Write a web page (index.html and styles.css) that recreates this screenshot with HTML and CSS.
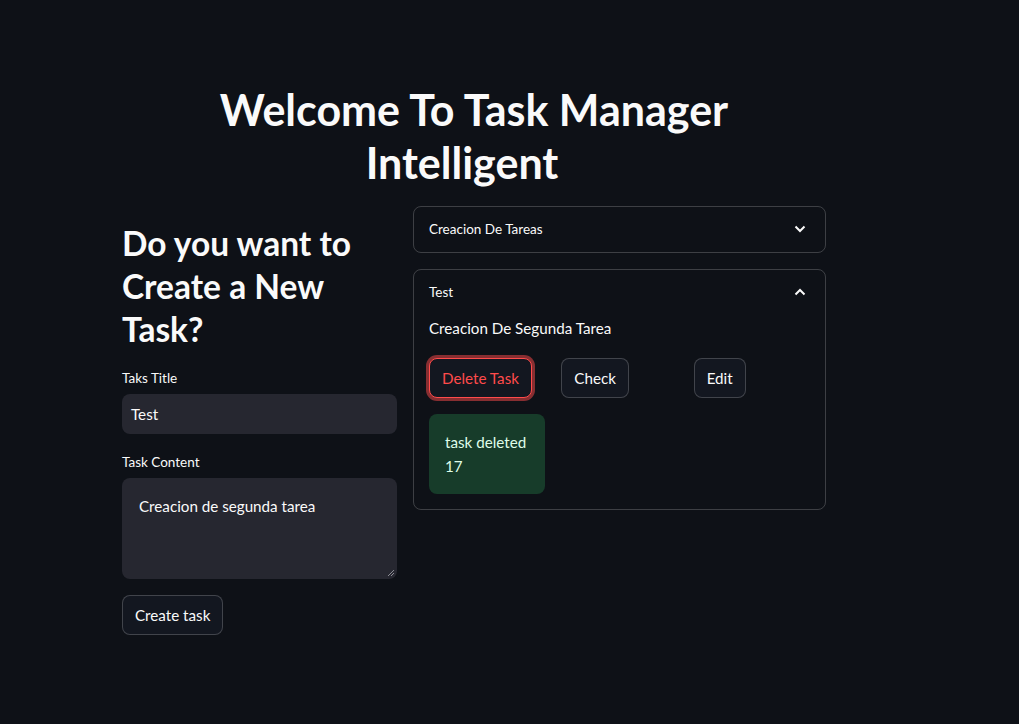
FILE: index.html
```html
<!DOCTYPE html>
<html lang="en">
<head>
<meta charset="utf-8">
<title>Task Manager</title>
<link rel="stylesheet" href="styles.css">
</head>
<body>
<main class="app">
  <div class="block">
    <h1 class="title">Welcome To Task Manager Intelligent<span class="anchor"></span></h1>
    <div class="columns">
      <section class="col col-left">
        <h2 class="subtitle">Do you want to Create a New Task?</h2>
        <div class="field">
          <label class="label">Taks Title</label>
          <div class="input">Test</div>
        </div>
        <div class="field">
          <label class="label">Task Content</label>
          <div class="textarea">Creacion de segunda tarea
            <svg class="grip" width="8" height="8" viewBox="0 0 8 8"><path d="M7 1L1 7M7 4L4 7" stroke="#8a8b93" stroke-width="1"/></svg>
          </div>
        </div>
        <div class="field">
          <button class="btn">Create task</button>
        </div>
      </section>
      <section class="col col-right">
        <div class="expander">
          <div class="exp-head">
            <span>Creacion De Tareas</span>
            <svg class="chev" width="12" height="8" viewBox="0 0 12 8"><path d="M1.5 1.5L6 6L10.5 1.5" fill="none" stroke="#fafafa" stroke-width="2"/></svg>
          </div>
        </div>
        <div class="expander">
          <div class="exp-head">
            <span>Test</span>
            <svg class="chev" width="12" height="8" viewBox="0 0 12 8"><path d="M1.5 6.5L6 2L10.5 6.5" fill="none" stroke="#fafafa" stroke-width="2"/></svg>
          </div>
          <div class="exp-body">
            <p class="content">Creacion De Segunda Tarea</p>
            <div class="btn-row">
              <div class="btn-col"><button class="btn btn-danger">Delete Task</button></div>
              <div class="btn-col"><button class="btn">Check</button></div>
              <div class="btn-col"><button class="btn">Edit</button></div>
            </div>
            <div class="btn-row">
              <div class="btn-col">
                <div class="alert">task deleted<br>17</div>
              </div>
              <div class="btn-col"></div>
              <div class="btn-col"></div>
            </div>
          </div>
        </div>
      </section>
    </div>
  </div>
</main>
</body>
</html>
```

FILE: styles.css
```css
* { box-sizing: border-box; }
html, body {
  margin: 0;
  padding: 0;
  background: #0e1117;
  color: #fafafa;
  font-family: "Lato", "Open Sans", sans-serif;
}
.app {
  min-height: 724px;
  padding-left: 122px;
}
.block {
  width: 704px;
  padding-top: 64px;
}
.title {
  margin: 0;
  padding: 20px 40px 16px;
  text-align: center;
  font-size: 43px;
  font-weight: 700;
  line-height: 52.8px;
}
.anchor {
  display: inline-block;
  width: 24px;
  height: 1px;
}
.columns {
  display: flex;
  gap: 16px;
  align-items: flex-start;
}
.col-left { width: 275px; }
.col-right {
  width: 413px;
  display: flex;
  flex-direction: column;
  gap: 16px;
}
.subtitle {
  margin: 0;
  padding: 16px 0 15px;
  font-size: 33.5px;
  font-weight: 700;
  line-height: 43.2px;
}
.field { margin-bottom: 16px; }
.label {
  display: block;
  font-size: 13.5px;
  line-height: 24px;
  height: 24px;
  margin-bottom: 4px;
}
.input {
  height: 40px;
  background: #262730;
  border-radius: 8px;
  padding: 0 9px;
  font-size: 15.2px;
  line-height: 40px;
}
.textarea {
  position: relative;
  height: 101px;
  background: #262730;
  border-radius: 8px;
  padding: 16px 17px;
  font-size: 15.2px;
  line-height: 24px;
}
.grip {
  position: absolute;
  right: 2px;
  bottom: 2px;
}
.btn {
  font-family: inherit;
  font-size: 15.2px;
  color: #fafafa;
  background: #131720;
  border: 1px solid rgba(250, 250, 250, 0.2);
  border-radius: 8px;
  height: 40px;
  padding: 0 12px;
  margin: 0;
}
.btn-danger {
  color: #ff4b4b;
  border-color: #ff4b4b;
  box-shadow: 0 0 0 3px rgba(255, 75, 75, 0.5);
}
.expander {
  border: 1px solid rgba(250, 250, 250, 0.2);
  border-radius: 8px;
}
.exp-head {
  height: 45px;
  display: flex;
  align-items: center;
  justify-content: space-between;
  padding: 0 19px 0 15px;
  font-size: 13.5px;
}
.exp-body {
  padding: 0 15px 15px;
  display: flex;
  flex-direction: column;
  gap: 16px;
}
.content {
  margin: 0 0 1px;
  font-size: 15.2px;
  line-height: 26px;
}
.btn-row {
  display: flex;
  gap: 16px;
}
.btn-col { flex: 1; }
.alert {
  background: #173c2a;
  color: #dffde9;
  border-radius: 8px;
  padding: 16px;
  font-size: 15.2px;
  line-height: 24px;
  white-space: nowrap;
}
```
